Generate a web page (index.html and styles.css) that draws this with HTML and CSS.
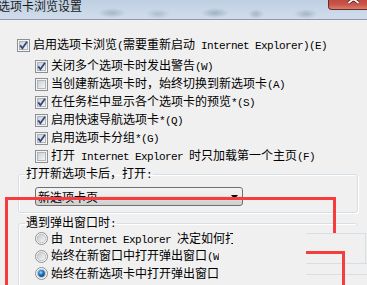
FILE: index.html
```html
<!DOCTYPE html>
<html lang="zh-CN">
<head>
    <meta charset="UTF-8">
    <title>选项卡浏览设置</title>
    <link rel="stylesheet" href="styles.css">
</head>
<body>
    <svg class="defs" width="0" height="0" aria-hidden="true">
        <defs>
            <linearGradient id="boxfill" x1="0" y1="0" x2="1" y2="1">
                <stop offset="0" stop-color="#c9ced4"/>
                <stop offset="1" stop-color="#f7f7f7"/>
            </linearGradient>
            <linearGradient id="ringfill" x1="0" y1="0" x2="1" y2="1">
                <stop offset="0" stop-color="#c4c8cd"/>
                <stop offset="1" stop-color="#f8f8f8"/>
            </linearGradient>
            <radialGradient id="dotfill" cx="0.4" cy="0.35" r="0.7">
                <stop offset="0" stop-color="#a9dcff"/>
                <stop offset="0.45" stop-color="#1e7fd0"/>
                <stop offset="1" stop-color="#0a3b70"/>
            </radialGradient>
            <symbol id="box" viewBox="0 0 13 13">
                <rect x="0.5" y="0.5" width="12" height="12" fill="#f4f4f4" stroke="#8e8f8f"/>
                <rect x="2.5" y="2.5" width="8" height="8" fill="url(#boxfill)" stroke="#b0b5bb"/>
            </symbol>
            <symbol id="check" viewBox="0 0 13 13">
                <use href="#box"/>
                <path d="M3.2 6.4 L5.4 9.2 L10 2.8" fill="none" stroke="#33477d" stroke-width="1.8"/>
            </symbol>
            <symbol id="radio" viewBox="0 0 13 13">
                <circle cx="6.5" cy="6.5" r="6" fill="#f6f6f6" stroke="#8e8f8f"/>
                <circle cx="6.5" cy="6.5" r="4.2" fill="url(#ringfill)" stroke="#b6bbc0" stroke-width="0.8"/>
            </symbol>
            <symbol id="radio-on" viewBox="0 0 13 13">
                <use href="#radio"/>
                <circle cx="6.5" cy="6.5" r="3.4" fill="url(#dotfill)"/>
            </symbol>
        </defs>
    </svg>

    <div class="window">
        <div class="titlebar">
            <span class="title">选项卡浏览设置</span>
            <span class="close">
                <svg width="38" height="9" viewBox="0 0 38 9">
                    <path d="M20 -4 L24.5 -0.5 L29 -4 M19.5 3 L24.5 -1 L29.5 3" fill="none" stroke="#5a1d1a" stroke-width="3.4"/>
                    <path d="M20 -4 L24.5 -0.5 L29 -4 M19.5 3 L24.5 -1 L29.5 3" fill="none" stroke="#fff" stroke-width="1.8"/>
                </svg>
            </span>
        </div>

        <div class="content">
            <div class="row main">
                <svg class="cb"><use href="#check"/></svg>
                <span>启用选项卡浏览<span class="en">(</span>需要重新启动<span class="en"> Internet Explorer)(E)</span></span>
            </div>
            <div class="sub">
                <div class="row">
                    <svg class="cb"><use href="#check"/></svg>
                    <span>关闭多个选项卡时发出警告<span class="en">(W)</span></span>
                </div>
                <div class="row">
                    <svg class="cb"><use href="#box"/></svg>
                    <span>当创建新选项卡时，始终切换到新选项卡<span class="en">(A)</span></span>
                </div>
                <div class="row">
                    <svg class="cb"><use href="#check"/></svg>
                    <span>在任务栏中显示各个选项卡的预览<span class="en">*(S)</span></span>
                </div>
                <div class="row">
                    <svg class="cb"><use href="#check"/></svg>
                    <span>启用快速导航选项卡<span class="en">*(Q)</span></span>
                </div>
                <div class="row">
                    <svg class="cb"><use href="#check"/></svg>
                    <span>启用选项卡分组<span class="en">*(G)</span></span>
                </div>
                <div class="row">
                    <svg class="cb"><use href="#box"/></svg>
                    <span>打开<span class="en"> Internet Explorer </span>时只加载第一个主页<span class="en">(F)</span></span>
                </div>
            </div>

            <fieldset class="group first">
                <legend>打开新选项卡后，打开<span class="en">:</span></legend>
                <div class="select">
                    <span>新选项卡页</span>
                    <svg class="arrow" width="7" height="4" viewBox="0 0 7 4"><path d="M0 0 H7 L3.5 4 Z" fill="#000"/></svg>
                </div>
            </fieldset>

            <fieldset class="group second">
                <legend>遇到弹出窗口时<span class="en">:</span></legend>
                <div class="row">
                    <svg class="cb"><use href="#radio"/></svg>
                    <span>由<span class="en"> Internet Explorer </span>决定如何打开弹出窗口<span class="en">(L)</span></span>
                </div>
                <div class="row">
                    <svg class="cb"><use href="#radio"/></svg>
                    <span>始终在新窗口中打开弹出窗口<span class="en">(W)</span></span>
                </div>
                <div class="row">
                    <svg class="cb"><use href="#radio-on"/></svg>
                    <span>始终在新选项卡中打开弹出窗口<span class="en">(T)</span></span>
                </div>
            </fieldset>
        </div>

        <!-- pasted-over part of the screenshot -->
        <div class="patch patch-a"></div>
        <div class="patch patch-b"></div>
        <div class="edge edge-top"></div>
        <div class="edge edge-side"></div>
        <div class="edge edge-low1"></div>
        <div class="edge edge-low2"></div>

        <!-- red annotation -->
        <div class="mark" style="left:5px; top:197px; width:331px; height:3px;"></div>
        <div class="mark" style="left:5px; top:197px; width:3px; height:88px;"></div>
        <div class="mark" style="left:333px; top:197px; width:3px; height:36px;"></div>
        <div class="mark" style="left:306px; top:251px; width:39px; height:3px;"></div>
        <div class="mark" style="left:342px; top:251px; width:3px; height:34px;"></div>
    </div>
</body>
</html>
```

FILE: styles.css
```css
body {
    margin: 0;
    width: 367px;
    height: 285px;
    overflow: hidden;
    background: #f0f0f0;
    font-family: "Noto Sans CJK SC", sans-serif;
    font-size: 12px;
    color: #000;
}
.defs {
    position: absolute;
    width: 0;
    height: 0;
}
.window {
    position: relative;
    height: 285px;
    overflow: hidden;
}
.en {
    font-family: "Liberation Mono", monospace;
    font-size: 11px;
    letter-spacing: -0.6px;
}

/* title bar */
.titlebar {
    display: flex;
    height: 19px;
    border-bottom: 1px solid #8d9cad;
    background:
        radial-gradient(ellipse 14px 5px at 112px 13px, rgba(120, 140, 160, 0.45), transparent),
        radial-gradient(ellipse 12px 5px at 158px 14px, rgba(120, 140, 160, 0.35), transparent),
        radial-gradient(ellipse 14px 5px at 215px 13px, rgba(110, 130, 150, 0.45), transparent),
        radial-gradient(ellipse 8px 5px at 256px 14px, rgba(110, 130, 150, 0.4), transparent),
        radial-gradient(ellipse 12px 5px at 306px 14px, rgba(110, 130, 150, 0.4), transparent),
        linear-gradient(#bfd0e3, #c9d8e8 60%, #d0dcea);
}
.title {
    margin-left: -2px;
    height: 11px;
    line-height: 11px;
    color: #1a1a1a;
}
.close {
    margin-left: auto;
    width: 38px;
    height: 9px;
    border-left: 1px solid #6b2a26;
    border-bottom: 1px solid #6b2a26;
    border-radius: 0 0 0 4px;
    background: linear-gradient(#c14b40, #c9544a 50%, #d9806d);
}
.close svg {
    display: block;
}

/* options */
.content {
    padding-top: 16px;
}
.row {
    display: flex;
    align-items: center;
    gap: 3px;
    height: 18px;
    line-height: 18px;
    white-space: nowrap;
}
.row.main {
    padding-left: 17px;
}
.sub {
    margin-top: 3px;
    padding-left: 35px;
}
.cb {
    width: 13px;
    height: 13px;
    flex: none;
}

/* group boxes */
.group {
    margin: 1px 9px 0 18px;
    padding: 5px 0 6px 16px;
    border: 1px solid #d5dfe5;
    border-radius: 3px;
    box-shadow: inset 1px 1px 0 #fff, 1px 1px 0 #fff;
    min-width: 0;
}
.group legend {
    margin-left: -10px;
    padding: 0 1px;
    line-height: 14px;
    white-space: nowrap;
}
.group.second {
    margin-top: 2px;
    padding-top: 0;
    padding-bottom: 20px;
}
.group.second .row {
    height: 17.5px;
}
.group.second .row:first-of-type {
    margin-top: -1px;
}
.select {
    display: flex;
    align-items: center;
    justify-content: space-between;
    box-sizing: border-box;
    width: 208px;
    height: 19px;
    padding: 0 4px 0 2px;
    border: 1px solid #707070;
    border-radius: 3px;
    background: linear-gradient(#f3f3f3, #ebebeb 50%, #dddddd 50%, #cfcfcf);
    line-height: 17px;
}

/* pasted part + annotation */
.patch {
    position: absolute;
    background: #f0f0f0;
    right: 0;
    bottom: 0;
}
.patch-a {
    left: 233px;
    top: 226px;
}
.patch-b {
    left: 219px;
    top: 247px;
}
.edge {
    position: absolute;
    background: #d5dfe5;
}
.edge-top {
    left: 306px;
    top: 233px;
    width: 61px;
    height: 1px;
}
.edge-side {
    left: 365px;
    top: 233px;
    width: 1px;
    height: 30px;
}
.edge-low1 {
    left: 306px;
    top: 263px;
    width: 61px;
    height: 1px;
}
.edge-low2 {
    left: 306px;
    top: 274px;
    width: 61px;
    height: 1px;
}
.mark {
    position: absolute;
    background: #f63c3c;
}
```
